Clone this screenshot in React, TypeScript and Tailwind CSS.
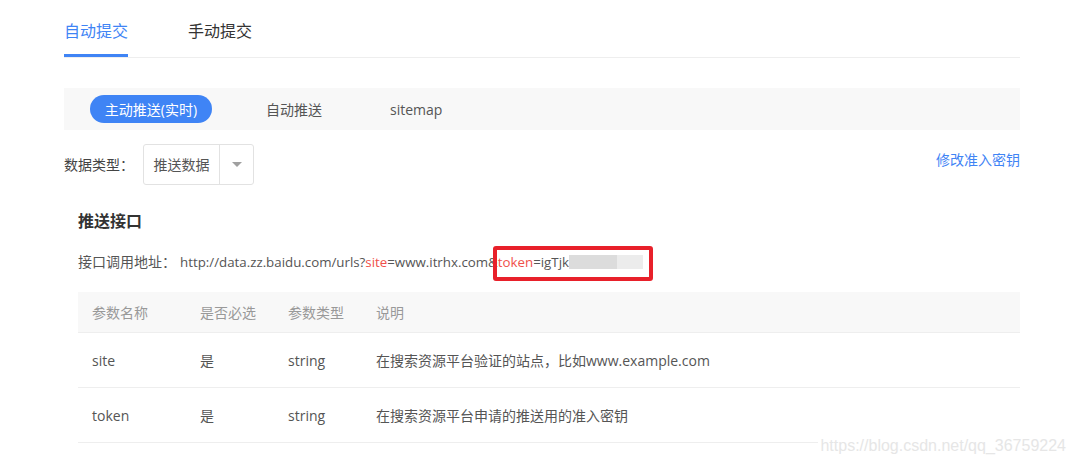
import React from "react";

const font = { fontFamily: '"Open Sans", "Noto Sans CJK SC", "Noto Sans", sans-serif' };

function TopTabs() {
  return (
    <div className="flex h-[58px] border-b border-[#eeeeee]">
      <div className="flex w-16 flex-col justify-between pt-[19px]">
        <span className="text-[16px] leading-6 text-[#3f84f5]">自动提交</span>
        <span className="h-[3px] w-16 bg-[#3f84f5]" />
      </div>
      <div className="ml-[60px] pt-[19px]">
        <span className="text-[16px] leading-6 text-[#333333]">手动提交</span>
      </div>
    </div>
  );
}

function PushModes() {
  return (
    <div className="mt-[30px] flex h-[42px] items-center bg-[#f8f8f8] pl-[26px] text-[14px]">
      <span className="flex h-[28px] w-[122px] items-center justify-center rounded-full bg-[#3f84f5] text-white">
        主动推送(实时)
      </span>
      <span className="ml-[54px] text-[#555555]">自动推送</span>
      <span className="ml-[68px] text-[#555555]">sitemap</span>
    </div>
  );
}

function DataTypeRow() {
  return (
    <div className="mt-[14px] flex items-start justify-between">
      <div className="flex items-center">
        <span className="w-[79px] text-[14px] text-[#444444]">数据类型：</span>
        <div className="flex h-[41px] w-[111px] items-stretch rounded-[3px] border border-[#e2e2e2]">
          <span className="flex w-[75px] items-center justify-center text-[14px] text-[#555555]">
            推送数据
          </span>
          <span className="flex flex-1 items-center justify-center border-l border-[#e2e2e2]">
            <svg width="10" height="6" viewBox="0 0 10 6">
              <path d="M0 0 L10 0 L5 5 Z" fill="#a0a0a0" />
            </svg>
          </span>
        </div>
      </div>
      <span className="mt-[5px] text-[14px] text-[#3f84f5]">修改准入密钥</span>
    </div>
  );
}

function Endpoint() {
  return (
    <div className="pl-[14px]">
      <div className="mt-[24px] text-[16px] font-bold leading-6 text-[#333333]">推送接口</div>
      <div className="mt-[19px] flex items-center text-[14px] leading-5 text-[#555555]">
        <span className="w-[102px]">接口调用地址：</span>
        <span className="flex items-center text-[13.3px]">
          <span>http://data.zz.baidu.com/urls?</span>
          <span className="text-[#f0504a]">site</span>
          <span>=www.itrhx.com&amp;</span>
          <span className="relative flex items-center">
            <span className="text-[#f0504a]">token</span>
            <span>=igTjk</span>
            <span className="h-[14px] w-[48px] bg-[#dcdcdc]" />
            <span className="h-[14px] w-[26px] bg-[#ececec]" />
            <span className="absolute -bottom-[9px] -left-[5px] -right-[10px] -top-[6px] rounded-[3px] border-[4px] border-[#e8202a]" />
          </span>
        </span>
      </div>
    </div>
  );
}

const rows = [
  { name: "site", req: "是", type: "string", desc: "在搜索资源平台验证的站点，比如www.example.com" },
  { name: "token", req: "是", type: "string", desc: "在搜索资源平台申请的推送用的准入密钥" },
];

function ParamTable() {
  return (
    <div className="ml-[14px] mt-[20px] text-[14px]">
      <div className="flex h-[41px] items-center border-b border-[#eeeeee] bg-[#f8f8f8] text-[#999999]">
        <span className="w-[122px] pl-[14px]">参数名称</span>
        <span className="w-[88px]">是否必选</span>
        <span className="w-[88px]">参数类型</span>
        <span>说明</span>
      </div>
      {rows.map((r) => (
        <div key={r.name} className="flex h-[55px] items-center border-b border-[#eeeeee] text-[#555555]">
          <span className="w-[122px] pl-[14px]">{r.name}</span>
          <span className="w-[88px]">{r.req}</span>
          <span className="w-[88px]">{r.type}</span>
          <span>{r.desc}</span>
        </div>
      ))}
    </div>
  );
}

export default function App() {
  return (
    <div className="relative h-[464px] w-[1076px] overflow-hidden bg-white" style={font}>
      <div className="ml-16 w-[956px]">
        <TopTabs />
        <PushModes />
        <DataTypeRow />
        <Endpoint />
        <ParamTable />
      </div>
      <span
        className="absolute bottom-[8px] right-[10px] bg-white pl-[2px] text-[16px] leading-5 text-[#e6e6e6]"
        style={{ fontFamily: '"Liberation Sans", Arial, sans-serif' }}
      >
        https://blog.csdn.net/qq_36759224
      </span>
    </div>
  );
}
